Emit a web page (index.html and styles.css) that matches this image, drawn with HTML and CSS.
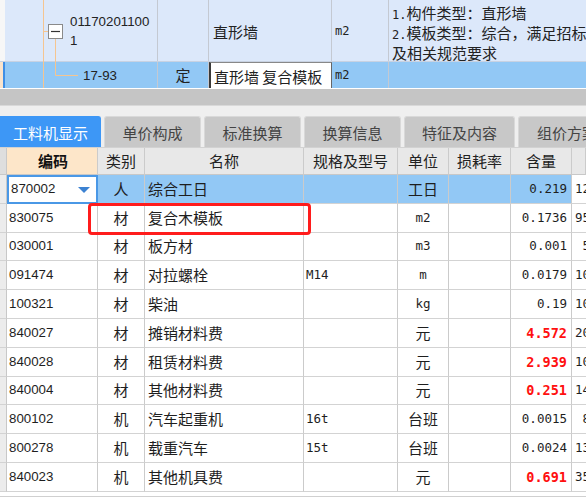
FILE: index.html
```html
<!DOCTYPE html>
<html>
<head>
<meta charset="utf-8">
<link rel="stylesheet" href="styles.css">
</head>
<body>
<div class="app">
  <div class="top">
    <div class="trow r1">
      <div class="tc gut"></div>
      <div class="tc tcode"><span class="num">01170201100<br>1</span></div>
      <div class="tc tcat"></div>
      <div class="tc tname">直形墙</div>
      <div class="tc tunit mono">m2</div>
      <div class="tc tdesc"><div class="desc-text"><span class="mono">1.</span>构件类型：直形墙<br><span class="mono">2.</span>模板类型：综合，满足招标文件<br>及相关规范要求</div></div>
    </div>
    <div class="trow r2">
      <div class="tc gut sel-gut"></div>
      <div class="tc tcode2"><span class="num">17-93</span></div>
      <div class="tc tcat c">定</div>
      <div class="tc tname editor">直形墙 复合模板</div>
      <div class="tc tunit mono">m2</div>
      <div class="tc tdesc"></div>
    </div>
    <svg class="tree" width="90" height="88" viewBox="0 0 90 88">
      <line x1="43.5" y1="0" x2="43.5" y2="88" stroke="#f5c590" stroke-width="1"/>
      <line x1="43.5" y1="31.5" x2="48" y2="31.5" stroke="#f5c590" stroke-width="1"/>
      <line x1="55.5" y1="39" x2="55.5" y2="75.5" stroke="#f5c590" stroke-width="1"/>
      <line x1="55.5" y1="75.5" x2="78" y2="75.5" stroke="#f5c590" stroke-width="1"/>
      <rect x="48.5" y="24.5" width="14" height="14" fill="#fff" stroke="#8a8a8a" stroke-width="1"/>
      <line x1="51" y1="31.5" x2="60" y2="31.5" stroke="#333" stroke-width="1.2"/>
    </svg>
  </div>
  <div class="hscroll"></div>
  <div class="tabs">
    <div class="tab active">工料机显示</div>
    <div class="tab w2">单价构成</div>
    <div class="tab w3">标准换算</div>
    <div class="tab w4">换算信息</div>
    <div class="tab w5">特征及内容</div>
    <div class="tab w6">组价方案</div>
  </div>
  <div class="grid">
    <div class="row head">
      <div class="cell gut"></div>
      <div class="cell code hcode">编码</div>
      <div class="cell c">类别</div>
      <div class="cell c">名称</div>
      <div class="cell c">规格及型号</div>
      <div class="cell c">单位</div>
      <div class="cell c">损耗率</div>
      <div class="cell c">含量</div>
      <div class="cell"></div>
    </div>
    <div class="row sel">
      <div class="cell gut"></div>
      <div class="cell code editcode"><span>870002</span><span class="caret"></span></div>
      <div class="cell c">人</div>
      <div class="cell name">综合工日</div>
      <div class="cell spec"></div>
      <div class="cell c">工日</div>
      <div class="cell"></div>
      <div class="cell qty">0.219</div>
      <div class="cell last">12</div>
    </div>
    <div class="row">
      <div class="cell gut"></div>
      <div class="cell code">830075</div>
      <div class="cell c">材</div>
      <div class="cell name">复合木模板</div>
      <div class="cell spec"></div>
      <div class="cell c mono">m2</div>
      <div class="cell"></div>
      <div class="cell qty">0.1736</div>
      <div class="cell last">95</div>
    </div>
    <div class="row">
      <div class="cell gut"></div>
      <div class="cell code">030001</div>
      <div class="cell c">材</div>
      <div class="cell name">板方材</div>
      <div class="cell spec"></div>
      <div class="cell c mono">m3</div>
      <div class="cell"></div>
      <div class="cell qty">0.001</div>
      <div class="cell last">&nbsp;5</div>
    </div>
    <div class="row">
      <div class="cell gut"></div>
      <div class="cell code">091474</div>
      <div class="cell c">材</div>
      <div class="cell name">对拉螺栓</div>
      <div class="cell spec">M14</div>
      <div class="cell c mono">m</div>
      <div class="cell"></div>
      <div class="cell qty">0.0179</div>
      <div class="cell last">10</div>
    </div>
    <div class="row">
      <div class="cell gut"></div>
      <div class="cell code">100321</div>
      <div class="cell c">材</div>
      <div class="cell name">柴油</div>
      <div class="cell spec"></div>
      <div class="cell c mono">kg</div>
      <div class="cell"></div>
      <div class="cell qty">0.19</div>
      <div class="cell last">10</div>
    </div>
    <div class="row">
      <div class="cell gut"></div>
      <div class="cell code">840027</div>
      <div class="cell c">材</div>
      <div class="cell name">摊销材料费</div>
      <div class="cell spec"></div>
      <div class="cell c">元</div>
      <div class="cell"></div>
      <div class="cell qty red">4.572</div>
      <div class="cell last">20</div>
    </div>
    <div class="row">
      <div class="cell gut"></div>
      <div class="cell code">840028</div>
      <div class="cell c">材</div>
      <div class="cell name">租赁材料费</div>
      <div class="cell spec"></div>
      <div class="cell c">元</div>
      <div class="cell"></div>
      <div class="cell qty red">2.939</div>
      <div class="cell last">10</div>
    </div>
    <div class="row">
      <div class="cell gut"></div>
      <div class="cell code">840004</div>
      <div class="cell c">材</div>
      <div class="cell name">其他材料费</div>
      <div class="cell spec"></div>
      <div class="cell c">元</div>
      <div class="cell"></div>
      <div class="cell qty red">0.251</div>
      <div class="cell last">14</div>
    </div>
    <div class="row">
      <div class="cell gut"></div>
      <div class="cell code">800102</div>
      <div class="cell c">机</div>
      <div class="cell name">汽车起重机</div>
      <div class="cell spec">16t</div>
      <div class="cell c">台班</div>
      <div class="cell"></div>
      <div class="cell qty">0.0015</div>
      <div class="cell last">&nbsp;8</div>
    </div>
    <div class="row">
      <div class="cell gut"></div>
      <div class="cell code">800278</div>
      <div class="cell c">机</div>
      <div class="cell name">载重汽车</div>
      <div class="cell spec">15t</div>
      <div class="cell c">台班</div>
      <div class="cell"></div>
      <div class="cell qty">0.0024</div>
      <div class="cell last">13</div>
    </div>
    <div class="row">
      <div class="cell gut"></div>
      <div class="cell code">840023</div>
      <div class="cell c">机</div>
      <div class="cell name">其他机具费</div>
      <div class="cell spec"></div>
      <div class="cell c">元</div>
      <div class="cell"></div>
      <div class="cell qty red">0.691</div>
      <div class="cell last">35</div>
    </div>
    <div class="mark"></div>
  </div>
</div>
</body>
</html>
```

FILE: styles.css
```css
html, body {
  margin: 0;
  padding: 0;
}
body {
  width: 586px;
  height: 497px;
  overflow: hidden;
  background: #e9e9e9;
  font-family: "Noto Sans CJK SC", "Noto Sans", sans-serif;
  color: #1a1a1a;
}
.app {
  width: 586px;
  height: 497px;
  overflow: hidden;
  display: flex;
  flex-direction: column;
}

/* ---------- top tree grid ---------- */
.top {
  position: relative;
  height: 88px;
  flex: none;
  background: #fff;
}
.trow {
  display: grid;
  grid-template-columns: 5px 153px 51px 123px 57px 197px;
  box-sizing: border-box;
}
.trow.r1 {
  height: 62px;
  background: #dce8fa;
  border-bottom: 1px solid #c8d2e2;
}
.trow.r2 {
  height: 26px;
  background: #92c8f5;
}
.tc {
  box-sizing: border-box;
  border-right: 1px solid #c4c9d2;
  display: flex;
  align-items: center;
  font-size: 15px;
  line-height: 18px;
  overflow: hidden;
  white-space: nowrap;
  color: #222;
}
.tc.gut {
  background: #f7f7f7;
  border-right: none;
}
.tc.sel-gut {
  background: #fbe4cc;
  border-right: 2px solid #3f8fe6;
}
.tc.tcode {
  padding-left: 65px;
}
.tc.tcode2 {
  padding-left: 78px;
}
.num {
  font-family: "Liberation Sans", Arial, sans-serif;
  font-size: 13.3px;
  line-height: 19px;
  color: #222;
}
.tc.tname {
  padding-left: 4px;
  padding-top: 2px;
}
.tc.tunit {
  padding-left: 3px;
  font-size: 12px;
}
.tc.tdesc {
  border-right: none;
  padding-left: 3px;
  align-items: flex-start;
  padding-top: 4px;
}
.desc-text {
  font-size: 15px;
  line-height: 17px;
  white-space: nowrap;
}
.mono {
  font-family: "DejaVu Sans Mono", "Liberation Mono", monospace;
  font-size: 12px;
}
.tc.c {
  justify-content: center;
}
.tc.editor {
  background: #fff;
  padding-left: 3px;
  border-left: 2px solid #3a3a3a;
  border-top: 1px solid #888;
  border-right: 1px solid #666;
}
.tree {
  position: absolute;
  left: 0;
  top: 0;
}

/* ---------- scrollbar strip ---------- */
.hscroll {
  flex: none;
  height: 28px;
  box-sizing: border-box;
  border-top: 1px solid #fff;
  background: linear-gradient(#c5c5c5 0, #c5c5c5 16px, #d9d9d9 16px, #d9d9d9 17px, #efefef 17px);
}

/* ---------- tabs ---------- */
.tabs {
  flex: none;
  height: 32px;
  box-sizing: border-box;
  display: flex;
  gap: 3px;
  background: #efefef;
  border-bottom: 1px solid #d2d2d2;
}
.tab {
  box-sizing: border-box;
  height: 31px;
  display: flex;
  align-items: center;
  justify-content: center;
  font-size: 15px;
  color: #444;
  background: #c8c8c8;
  border: 1px solid #d9d9d9;
  border-bottom: none;
  border-radius: 3px 3px 0 0;
  white-space: nowrap;
  flex: none;
}
.tab.active {
  width: 101px;
  background: #3d97f6;
  border-color: #3d97f6;
  color: #fff;
  border-radius: 0 3px 0 0;
}
.tab.w2 { width: 97px; }
.tab.w3 { width: 97px; }
.tab.w4 { width: 97px; }
.tab.w5 { width: 111px; }
.tab.w6 { width: 100px; justify-content: flex-start; padding-left: 18px; }

/* ---------- material grid ---------- */
.grid {
  position: relative;
  flex: 1;
  background: #fff;
  border-bottom: 1px solid #d0d0d0;
}
.row {
  display: grid;
  grid-template-columns: 7px 91px 47px 159px 94px 51px 62px 61px 14px;
  height: 28.8px;
  box-sizing: border-box;
}
.row.head {
  height: 27px;
  background: #e8e8e8;
}
.cell {
  box-sizing: border-box;
  border-right: 1px solid #cbcbcb;
  border-bottom: 1px solid #d3d3d3;
  display: flex;
  align-items: center;
  font-size: 15px;
  line-height: 18px;
  white-space: nowrap;
  overflow: hidden;
  color: #1e1e1e;
}
.head .cell {
  color: #222;
  border-bottom-color: #c8c8c8;
}
.cell.gut {
  background: #ececec;
  border-right-color: #c8c8c8;
}
.head .cell.gut {
  background: #dedede;
}
.cell.c {
  justify-content: center;
}
.cell.code {
  padding-left: 2px;
  font-family: "Liberation Sans", Arial, sans-serif;
  font-size: 13.3px;
}
.cell.hcode {
  background: #fde6c9;
  justify-content: center;
  font-family: "Noto Sans CJK SC", sans-serif;
  font-size: 15px;
  font-weight: bold;
  color: #111;
}
.cell.name {
  padding-left: 3px;
}
.cell.spec {
  padding-left: 2px;
  font-family: "DejaVu Sans Mono", "Liberation Mono", monospace;
  font-size: 12.5px;
}
.cell.mono {
  font-family: "DejaVu Sans Mono", "Liberation Mono", monospace;
  font-size: 12.5px;
}
.cell.qty {
  justify-content: flex-end;
  padding-right: 4px;
  font-family: "DejaVu Sans Mono", "Liberation Mono", monospace;
  font-size: 12.5px;
}
.cell.qty.red {
  color: #ff1010;
  font-weight: bold;
  font-size: 13.5px;
}
.cell.last {
  border-right: none;
  padding-left: 3px;
  font-family: "DejaVu Sans Mono", "Liberation Mono", monospace;
  font-size: 12.5px;
}
.row.sel .cell {
  background: #92c8f5;
}
.row.sel .cell.gut {
  background: #ececec;
}
.row.sel .cell.last {
  background: #fff;
}
.row.sel .cell.editcode {
  background: #fff;
  border: 2px solid #4a98e6;
  justify-content: space-between;
  padding-right: 6px;
}
.caret {
  width: 0;
  height: 0;
  border-left: 6px solid transparent;
  border-right: 6px solid transparent;
  border-top: 6px solid #3c82d2;
  margin-top: 2px;
}
.mark {
  position: absolute;
  left: 88px;
  top: 55px;
  width: 223px;
  height: 32px;
  box-sizing: border-box;
  border: 3px solid #ff1c1c;
  border-radius: 4px;
}
```
